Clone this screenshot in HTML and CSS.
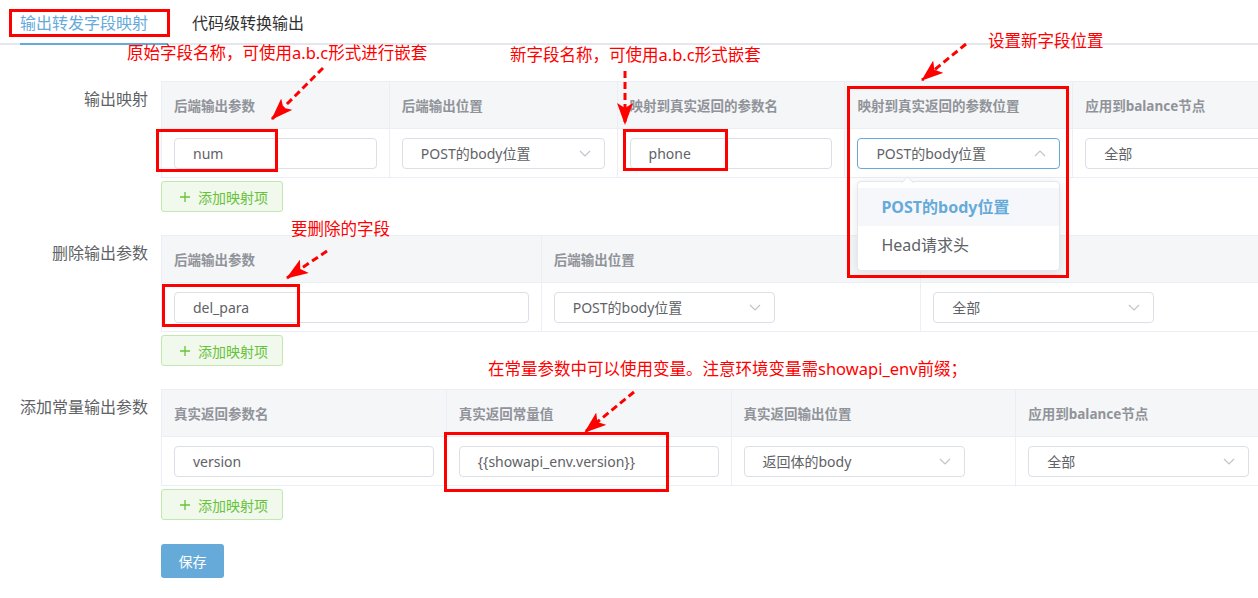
FILE: index.html
```html
<!DOCTYPE html>
<html lang="zh-CN">
<head>
  <meta charset="UTF-8" />
  <meta name="viewport" content="width=device-width, initial-scale=1.0"/>
  <title>输出转发字段映射</title>
  <link rel="stylesheet" href="styles.css">
</head>
<body>

  <!-- Tabs -->
  <div class="tabs">
    <div class="tab active">输出转发字段映射</div>
    <div class="tab">代码级转换输出</div>
  </div>

  <div class="form">

    <!-- 输出映射 -->
    <div class="form-item">
      <div class="label">输出映射</div>
      <div class="content">
        <div class="grid cols-5">
          <div class="th">后端输出参数</div>
          <div class="th">后端输出位置</div>
          <div class="th">映射到真实返回的参数名</div>
          <div class="th">映射到真实返回的参数位置</div>
          <div class="th">应用到balance节点</div>

          <div class="td"><div class="input">num</div></div>
          <div class="td">
            <div class="select">POST的body位置
              <svg class="arrow" viewBox="0 0 12 7"><path d="M1 1 L6 6 L11 1"/></svg>
            </div>
          </div>
          <div class="td"><div class="input">phone</div></div>
          <div class="td">
            <div class="select focus">POST的body位置
              <svg class="arrow" viewBox="0 0 12 7"><path d="M1 6 L6 1 L11 6"/></svg>
              <div class="dropdown">
                <div class="item hover">POST的body位置</div>
                <div class="item">Head请求头</div>
              </div>
            </div>
          </div>
          <div class="td">
            <div class="select">全部
              <svg class="arrow" viewBox="0 0 12 7"><path d="M1 1 L6 6 L11 1"/></svg>
            </div>
          </div>
        </div>
        <button class="add-btn">
          <svg class="plus" viewBox="0 0 10 10"><path d="M5 0 V10 M0 5 H10"/></svg>
          添加映射项
        </button>
      </div>
    </div>

    <!-- 删除输出参数 -->
    <div class="form-item">
      <div class="label">删除输出参数</div>
      <div class="content">
        <div class="grid cols-3">
          <div class="th">后端输出参数</div>
          <div class="th">后端输出位置</div>
          <div class="th"></div>

          <div class="td"><div class="input">del_para</div></div>
          <div class="td">
            <div class="select">POST的body位置
              <svg class="arrow" viewBox="0 0 12 7"><path d="M1 1 L6 6 L11 1"/></svg>
            </div>
          </div>
          <div class="td">
            <div class="select">全部
              <svg class="arrow" viewBox="0 0 12 7"><path d="M1 1 L6 6 L11 1"/></svg>
            </div>
          </div>
        </div>
        <button class="add-btn">
          <svg class="plus" viewBox="0 0 10 10"><path d="M5 0 V10 M0 5 H10"/></svg>
          添加映射项
        </button>
      </div>
    </div>

    <!-- 添加常量输出参数 -->
    <div class="form-item">
      <div class="label">添加常量输出参数</div>
      <div class="content">
        <div class="grid cols-4">
          <div class="th">真实返回参数名</div>
          <div class="th">真实返回常量值</div>
          <div class="th">真实返回输出位置</div>
          <div class="th">应用到balance节点</div>

          <div class="td"><div class="input">version</div></div>
          <div class="td"><div class="input">{{showapi_env.version}}</div></div>
          <div class="td">
            <div class="select">返回体的body
              <svg class="arrow" viewBox="0 0 12 7"><path d="M1 1 L6 6 L11 1"/></svg>
            </div>
          </div>
          <div class="td">
            <div class="select">全部
              <svg class="arrow" viewBox="0 0 12 7"><path d="M1 1 L6 6 L11 1"/></svg>
            </div>
          </div>
        </div>
        <button class="add-btn">
          <svg class="plus" viewBox="0 0 10 10"><path d="M5 0 V10 M0 5 H10"/></svg>
          添加映射项
        </button>
      </div>
    </div>

    <div class="form-item">
      <div class="label"></div>
      <button class="save-btn">保存</button>
    </div>
  </div>

  <!-- Annotations drawn over the screenshot -->
  <div class="notes">
    <div class="box box-tab"></div>
    <div class="box box-num"></div>
    <div class="box box-phone"></div>
    <div class="box box-drop"></div>
    <div class="box box-del"></div>
    <div class="box box-env"></div>

    <div class="note note-1">原始字段名称，可使用a.b.c形式进行嵌套</div>
    <div class="note note-2">新字段名称，可使用a.b.c形式嵌套</div>
    <div class="note note-3">设置新字段位置</div>
    <div class="note note-4">要删除的字段</div>
    <div class="note note-5">在常量参数中可以使用变量。注意环境变量需showapi_env前缀；</div>

    <svg class="arrows" width="1258" height="598" viewBox="0 0 1258 598">
      <defs>
        <marker id="head" markerUnits="userSpaceOnUse" viewBox="0 0 22 16"
                markerWidth="22" markerHeight="16" refX="21" refY="8" orient="auto">
          <path d="M0 0 L22 8 L0 16 L5 8 Z" fill="#f00"/>
        </marker>
      </defs>
      <line x1="323" y1="68" x2="272" y2="119" marker-end="url(#head)"/>
      <line x1="625" y1="71" x2="625" y2="124" marker-end="url(#head)"/>
      <line x1="966" y1="44" x2="922" y2="80" marker-end="url(#head)"/>
      <line x1="327" y1="251" x2="287" y2="278" marker-end="url(#head)"/>
      <line x1="634" y1="392" x2="585" y2="432" marker-end="url(#head)"/>
    </svg>
  </div>

</body>
</html>
```

FILE: styles.css
```css
:root {
  --primary: #66aada;
  --text: #606266;
  --head: #909399;
  --line: #ebeef5;
  --border: #dcdfe6;
  --red: #ff0000;
  --font: "Noto Sans", "Noto Sans CJK SC", sans-serif;
}

* {
  margin: 0;
  padding: 0;
  box-sizing: border-box;
}

html, body {
  width: 1258px;
  height: 598px;
  overflow: hidden;
  background: #fff;
}

body {
  position: relative;
  font-family: var(--font);
  color: var(--text);
}

/* Tabs */
.tabs {
  display: flex;
  height: 45px;
  padding-left: 20px;
  border-bottom: 2px solid #e4e7ed;
}

.tab {
  position: relative;
  height: 43px;
  line-height: 47px;
  padding: 0 20px 0 24px;
  font-size: 16px;
  color: #303133;
}

.tab:first-child {
  padding-left: 0;
}

.tab.active {
  color: var(--primary);
}

.tab.active::after {
  content: "";
  position: absolute;
  left: 0;
  right: 0;
  bottom: -2px;
  height: 2px;
  background: var(--primary);
}

/* Form */
.form {
  padding-top: 36px;
}

.form-item {
  display: flex;
  margin-bottom: 23px;
}

.label {
  width: 161px;
  flex-shrink: 0;
  padding-right: 13px;
  text-align: right;
  font-size: 16px;
  line-height: 36px;
  color: var(--text);
  white-space: nowrap;
}

.content {
  width: 1140px;
  flex-shrink: 0;
}

.grid {
  display: grid;
  border-top: 1px solid var(--line);
  border-left: 1px solid var(--line);
}

.cols-5 { grid-template-columns: repeat(5, 1fr); }
.cols-4 { grid-template-columns: repeat(4, 1fr); }
.cols-3 { grid-template-columns: repeat(3, 1fr); }

.th, .td {
  display: flex;
  align-items: center;
  padding: 0 12px;
  border-right: 1px solid var(--line);
  border-bottom: 1px solid var(--line);
  min-width: 0;
}

.th {
  height: 47px;
  padding-bottom: 1px;
  background: #f5f6f8;
  font-size: 13.5px;
  font-weight: bold;
  color: var(--head);
  white-space: nowrap;
}

.td {
  height: 49px;
}

.input, .select {
  width: 100%;
  height: 31px;
  line-height: 29px;
  padding: 0 18px;
  border: 1px solid var(--border);
  border-radius: 4px;
  font-size: 14px;
  color: var(--text);
  white-space: nowrap;
  background: #fff;
}

.select {
  position: relative;
  display: flex;
  align-items: center;
  justify-content: space-between;
  max-width: 221px;
  padding-right: 13px;
}

.select.focus {
  border-color: var(--primary);
}

.arrow {
  width: 12px;
  height: 7px;
  flex-shrink: 0;
  fill: none;
  stroke: #c0c4cc;
  stroke-width: 1.2;
}

/* Dropdown popper */
.dropdown {
  position: absolute;
  top: 42px;
  left: -1px;
  right: -1px;
  padding: 6px 0;
  background: #fff;
  border: 1px solid #e4e7ed;
  border-radius: 4px;
  box-shadow: 0 2px 12px rgba(0,0,0,0.1);
  z-index: 5;
}

.dropdown::before {
  content: "";
  position: absolute;
  top: -4px;
  left: 45px;
  width: 8px;
  height: 8px;
  background: #fff;
  border-top: 1px solid #e4e7ed;
  border-left: 1px solid #e4e7ed;
  transform: rotate(45deg);
}

.item {
  position: relative;
  height: 38px;
  line-height: 38px;
  padding: 0 23px;
  font-size: 16px;
  color: var(--text);
}

.item.hover {
  background: #f5f7fa;
  color: var(--primary);
  font-weight: bold;
}

/* Buttons */
.add-btn {
  display: flex;
  align-items: center;
  gap: 8px;
  width: 122px;
  height: 31px;
  margin-top: 3px;
  padding-left: 18px;
  border: 1px solid #c2e7b0;
  border-radius: 3px;
  background: #f0f9eb;
  color: #67c23a;
  font-family: var(--font);
  font-size: 14px;
}

.plus {
  width: 10px;
  height: 10px;
  fill: none;
  stroke: #67c23a;
  stroke-width: 1.3;
}

.save-btn {
  width: 63px;
  height: 34px;
  margin-top: 1px;
  border: none;
  border-radius: 3px;
  background: var(--primary);
  color: #fff;
  font-family: var(--font);
  font-size: 14px;
}

/* Red annotations on top */
.notes {
  position: absolute;
  inset: 0;
  pointer-events: none;
  z-index: 10;
}

.box {
  position: absolute;
  border: 3px solid var(--red);
}

.box-tab   { left: 9px;   top: 9px;   width: 161px; height: 28px; }
.box-num   { left: 156px; top: 129px; width: 122px; height: 43px; }
.box-phone { left: 623px; top: 129px; width: 105px; height: 42px; }
.box-drop  { left: 847px; top: 86px;  width: 222px; height: 192px; }
.box-del   { left: 162px; top: 284px; width: 138px; height: 43px; }
.box-env   { left: 444px; top: 432px; width: 225px; height: 60px; }

.note {
  position: absolute;
  font-size: 16.5px;
  line-height: 20px;
  color: var(--red);
  white-space: nowrap;
}

.note-1 { left: 127px; top: 43px; }
.note-2 { left: 510px; top: 45px; }
.note-3 { left: 988px; top: 31px; }
.note-4 { left: 291px; top: 219px; }
.note-5 { left: 488px; top: 359px; }

.arrows {
  position: absolute;
  left: 0;
  top: 0;
}

.arrows line {
  stroke: var(--red);
  stroke-width: 3;
  stroke-dasharray: 7 4;
}
```
